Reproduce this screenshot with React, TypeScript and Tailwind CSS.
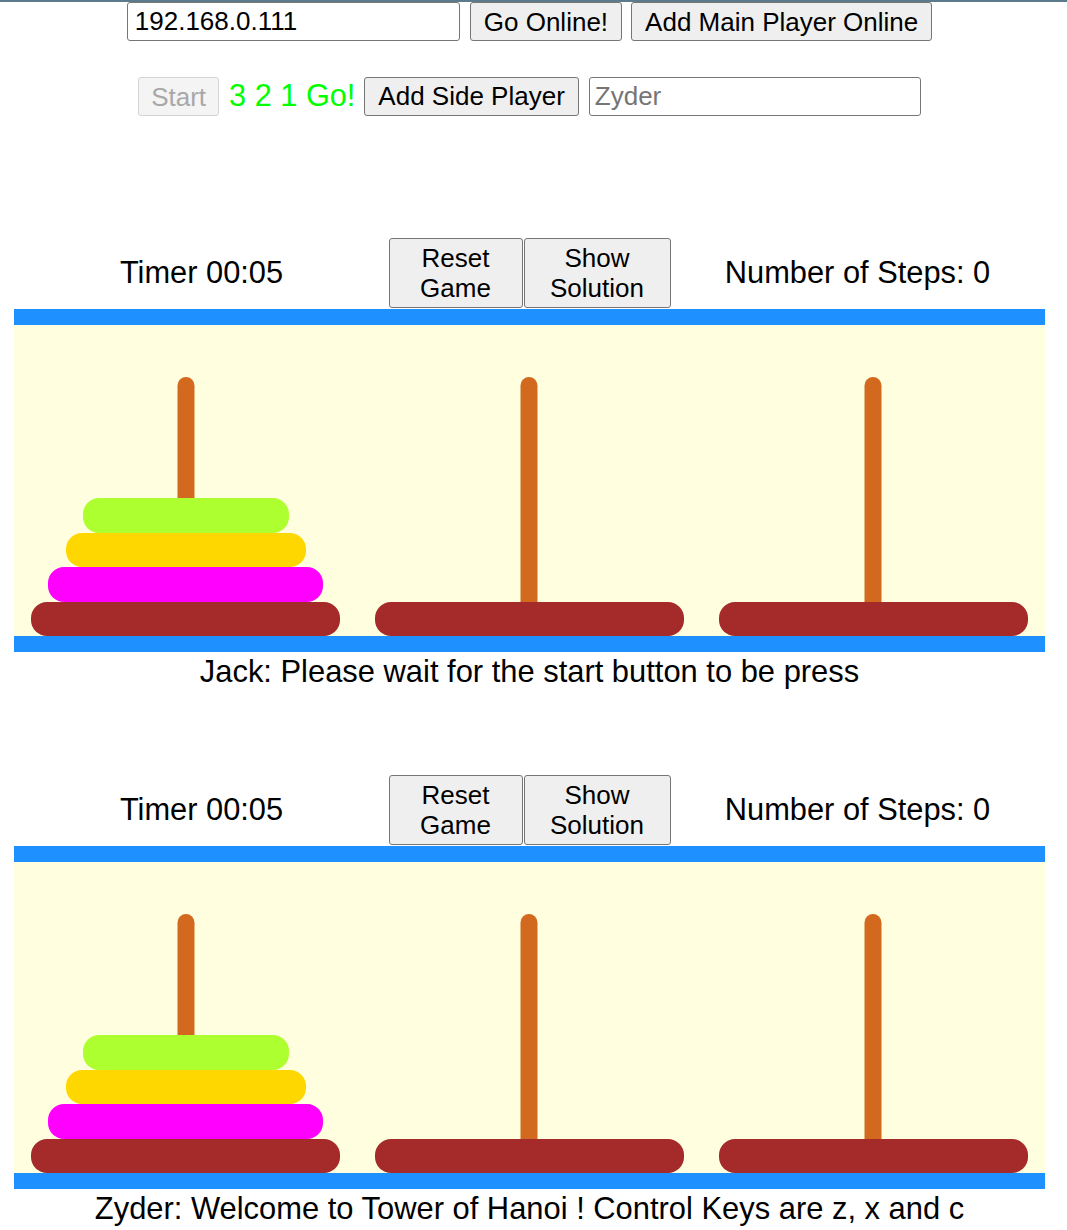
import React from 'react';

const DISKS = [
    { w: 'w-[60%]', bg: 'bg-[#adff2f]' },
    { w: 'w-[70%]', bg: 'bg-[#ffd700]' },
    { w: 'w-[80%]', bg: 'bg-[#ff00ff]' },
];

const btn = 'bg-[#efefef] border border-[#767676] rounded-[3px] text-black text-[26px] leading-[30px]';

const Pole: React.FC<{ withStack?: boolean }> = ({ withStack }) => (
    <div className="relative h-full flex flex-col justify-end items-center">
        <div className="absolute top-[52px] bottom-0 left-1/2 -translate-x-1/2 w-[17px] rounded-t-full bg-[#d2691e]" />
        {withStack &&
            DISKS.map((d, i) => (
                <div key={i} className={`relative ${d.w} ${d.bg} h-[34.5px] rounded-[16px]`} />
            ))}
        <div className="relative w-[90%] h-[34.5px] rounded-[16px] bg-[#a52a2a]" />
    </div>
);

const Game: React.FC<{ message: string; className?: string }> = ({ message, className }) => (
    <section className={className}>
        <div className="grid grid-cols-[328px_328px_328px] justify-center items-center">
            <div className="text-center text-[30.8px]">Timer 00:05</div>
            <div className="flex justify-center gap-[1px]">
                <button className={`${btn} w-[134px] h-[70px]`}>Reset Game</button>
                <button className={`${btn} w-[147px] h-[70px]`}>Show Solution</button>
            </div>
            <div className="text-center text-[30.8px]">Number of Steps: 0</div>
        </div>
        <div className="mt-[1px] mx-[14px] h-[343px] border-y-[16px] border-[#1e90ff] bg-[#ffffe0] grid grid-cols-3">
            <Pole withStack />
            <Pole />
            <Pole />
        </div>
        <p className="pt-[2px] text-center text-[30.9px] leading-[35px]">{message}</p>
    </section>
);

const App: React.FC = () => {
    return (
        <div className="min-h-[1230px] bg-white border-t-2 border-[#5b7a8b] text-black font-['Liberation_Sans',Arial,sans-serif]">
            <div className="w-[1059px]">
                <div className="flex justify-center items-center">
                    <input
                        type="text"
                        defaultValue="192.168.0.111"
                        className="w-[333px] h-[39px] px-[7px] border border-[#767676] rounded-[3px] text-[26px] text-black outline-none"
                    />
                    <button className={`${btn} ml-[10px] h-[39px] px-[13px]`}>Go Online!</button>
                    <button className={`${btn} ml-[9px] h-[39px] px-[13px]`}>Add Main Player Online</button>
                </div>

                <div className="mt-[32px] flex justify-center items-center">
                    <button
                        disabled
                        className="h-[39px] px-[12px] bg-[#f4f4f4] border border-[#d4d4d4] rounded-[3px] text-[26px] text-[#a8a8a8]"
                    >
                        Start
                    </button>
                    <span className="ml-[10px] text-[30.7px] text-[#00ff00]">3 2 1 Go!</span>
                    <button className={`${btn} ml-[9px] h-[39px] px-[13px]`}>Add Side Player</button>
                    <input
                        type="text"
                        placeholder="Zyder"
                        className="ml-[10px] w-[332px] h-[39px] px-[5px] border border-[#767676] rounded-[3px] text-[26px] placeholder:text-[#757575] outline-none"
                    />
                </div>

                <Game className="mt-[119px]" message="Jack: Please wait for the start button to be press" />
                <Game className="mt-[86px]" message="Zyder: Welcome to Tower of Hanoi ! Control Keys are z, x and c" />
            </div>
        </div>
    );
};

export default App;
